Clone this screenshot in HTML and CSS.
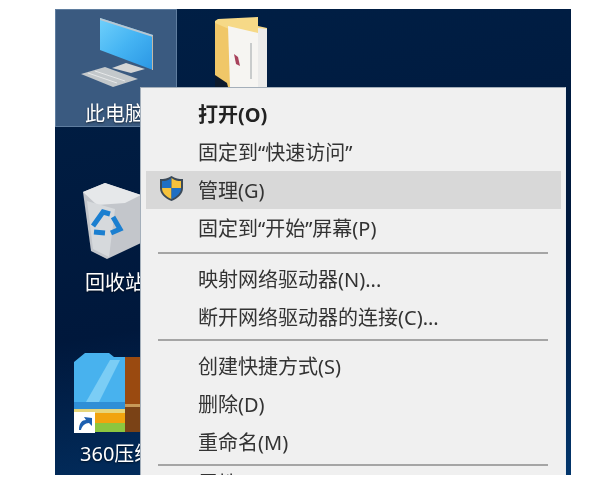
FILE: index.html
```html
<!DOCTYPE html>
<html lang="zh-CN">
<head>
    <meta charset="UTF-8">
    <title>此电脑</title>
    <link rel="stylesheet" href="styles.css">
</head>
<body>
    <div class="desktop">
        <!-- 桌面图标 -->
        <div class="icon icon-pc">
            <svg width="72" height="70" viewBox="0 0 72 70">
                <defs>
                    <linearGradient id="screen" x1="0" y1="0" x2="1" y2="1">
                        <stop offset="0" stop-color="#6fd0fb"/>
                        <stop offset="0.5" stop-color="#45b4f3"/>
                        <stop offset="1" stop-color="#2a96e4"/>
                    </linearGradient>
                </defs>
                <polygon points="19,0 72,17 72,52 19,32" fill="url(#screen)"/>
                <polygon points="19,0 72,17 72,19 19,2" fill="#b9c6d0"/>
                <polygon points="71,18 72,18 72,52 71,52" fill="#c4b8a6"/>
                <polygon points="31,50 45,45 64,51 50,55" fill="#d5d6d6"/>
                <polygon points="0,56 24,49 57,61 32,69" fill="#c3c8cb"/>
                <g stroke="#e6e8e9" stroke-width="1">
                    <line x1="7" y1="55" x2="36" y2="65"/>
                    <line x1="14" y1="53" x2="44" y2="63"/>
                </g>
            </svg>
            <span class="icon-label pc-label">此电脑</span>
        </div>

        <div class="icon icon-folder">
            <svg width="52" height="70" viewBox="0 0 52 70">
                <polygon points="0,4 3,2 43,0 43,9 52,11 52,70 0,70" fill="#f6d987"/>
                <polygon points="0,6 14,12 16,70 12,70 0,58" fill="#f0c768"/>
                <polygon points="0,58 12,66 13,70 0,70" fill="#0c1a2c"/>
                <polygon points="13,9 43,16 43,70 15,70" fill="#f6f5f2"/>
                <polygon points="43,11 52,12 52,70 43,70" fill="#ebebea"/>
                <line x1="36" y1="26" x2="36" y2="62" stroke="#c9cccc" stroke-width="2"/>
                <polygon points="19,37 23,40 25,49 21,47" fill="#a8425c"/>
            </svg>
        </div>

        <div class="icon icon-bin">
            <svg width="58" height="76" viewBox="0 0 58 76">
                <polygon points="0,9 22,0 58,12 58,60 24,76 8,68" fill="#c3c6cb"/>
                <polygon points="0,9 22,0 40,6 58,12 42,20 14,22" fill="#e6e8ea"/>
                <polygon points="4,18 32,26 26,74 10,66" fill="#d6d9dc"/>
                <g fill="none" stroke="#1b7fd0" stroke-width="5">
                    <path d="M10 43 L20 29 L27 31"/>
                    <path d="M30 34 L37 46 L28 50"/>
                    <path d="M22 50 L11 49"/>
                </g>
            </svg>
            <span class="icon-label bin-label">回收站</span>
        </div>

        <div class="icon icon-zip">
            <svg width="68" height="82" viewBox="0 0 68 82">
                <polygon points="0,10 11,1 35,1 40,5 51,5 51,56 0,56" fill="#48b2ee"/>
                <polygon points="12,50 36,8 46,8 24,52" fill="#7bcdf5"/>
                <rect x="0" y="50" width="51" height="7" fill="#2f8fd6"/>
                <rect x="0" y="57" width="51" height="4" fill="#e7d67a"/>
                <rect x="0" y="61" width="51" height="10" fill="#f1a40e"/>
                <rect x="0" y="71" width="51" height="9" fill="#8cc63f"/>
                <rect x="51" y="5" width="17" height="75" fill="#9a4a10"/>
                <rect x="51" y="52" width="17" height="28" fill="#7a4216"/>
                <rect x="51" y="52" width="17" height="3" fill="#c89a58"/>
                <rect x="0" y="60" width="21" height="21" fill="#ffffff"/>
                <path d="M5 78 C5 71 8 68 12 68 L10 65 L18 66 L18 74 L15 71 C11 71 8 74 7 78 Z" fill="#1c5fb0"/>
            </svg>
            <span class="icon-label zip-label">360压缩</span>
        </div>

        <!-- 右键菜单 -->
        <div class="menu">
            <div class="menu-item menu-item-bold">打开(O)</div>
            <div class="menu-item">固定到“快速访问”</div>
            <div class="menu-item selected">
                <svg class="shield" width="23" height="25" viewBox="0 0 23 25">
                    <path d="M11.5 0 C15 2.5 19 3 23 3 L23 12 C23 18 18 22.5 11.5 25 C5 22.5 0 18 0 12 L0 3 C4 3 8 2.5 11.5 0 Z" fill="#3c4a58"/>
                    <path d="M11.5 2 L11.5 12 L2 12 L2 5 C5.5 5 8.5 4.5 11.5 2 Z" fill="#1f6fc4"/>
                    <path d="M11.5 2 C14.5 4.5 17.5 5 21 5 L21 12 L11.5 12 Z" fill="#f6c23c"/>
                    <path d="M2 12 L11.5 12 L11.5 23 C6.5 21 2 17.5 2 12 Z" fill="#f6c23c"/>
                    <path d="M11.5 12 L21 12 C21 17.5 16.5 21 11.5 23 Z" fill="#1f6fc4"/>
                </svg>
                管理(G)
            </div>
            <div class="menu-item">固定到“开始”屏幕(P)</div>
            <div class="menu-sep menu-sep-first"></div>
            <div class="menu-item">映射网络驱动器(N)...</div>
            <div class="menu-item">断开网络驱动器的连接(C)...</div>
            <div class="menu-sep"></div>
            <div class="menu-item">创建快捷方式(S)</div>
            <div class="menu-item">删除(D)</div>
            <div class="menu-item">重命名(M)</div>
            <div class="menu-sep menu-sep-last"></div>
            <div class="menu-item">属性(R)</div>
        </div>
    </div>
</body>
</html>
```

FILE: styles.css
```css
body {
    margin: 0;
    background: #ffffff;
    font-family: "Noto Sans", "Noto Sans CJK SC", sans-serif;
    font-size: 20px;
}

.desktop {
    position: relative;
    width: 516px;
    height: 466px;
    margin: 9px 0 0 55px;
    overflow: hidden;
    background: linear-gradient(170deg, #001f45 0%, #00183c 60%, #03366c 100%);
    filter: blur(0.5px);
}

.icon {
    position: absolute;
    display: flex;
    flex-direction: column;
    color: #ffffff;
}

.icon-pc {
    left: 0;
    top: 0;
    width: 122px;
    height: 118px;
    box-sizing: border-box;
    padding-top: 8px;
    background: #3a5a80;
    border: 1px solid #5f7d9f;
}

.icon-pc svg {
    margin-left: 25px;
}

.icon-folder {
    left: 160px;
    top: 8px;
}

.icon-bin {
    left: 28px;
    top: 174px;
}

.icon-zip {
    left: 19px;
    top: 343px;
}

.icon-label {
    line-height: 24px;
    white-space: nowrap;
    text-shadow: 0 1px 2px rgba(0,0,0,0.6);
}

.pc-label {
    margin: 14px 0 0 29px;
}

.bin-label {
    margin: 12px 0 0 2px;
}

.zip-label {
    margin: 8px 0 0 6px;
}

.menu {
    position: absolute;
    left: 85px;
    top: 78px;
    width: 415px;
    padding: 7px 4px 0 5px;
    background: #f0f0f0;
    border: 1px solid #a4afba;
    border-right-color: #e8edf2;
    color: #333333;
}

.menu-item {
    display: flex;
    align-items: center;
    height: 38px;
    box-sizing: border-box;
    padding: 0 0 2px 52px;
    white-space: nowrap;
    position: relative;
}

.menu-item-bold {
    font-weight: 700;
    color: #222222;
}

.selected {
    background: #d8d8d8;
}

.shield {
    position: absolute;
    left: 14px;
    top: 5px;
}

.menu-sep {
    height: 2px;
    margin: 3px 13px 6px 12px;
    background: #a5a5a5;
}

.menu-sep-first {
    margin-top: 5px;
}

.menu-sep-last {
    margin-bottom: -2px;
}
```
